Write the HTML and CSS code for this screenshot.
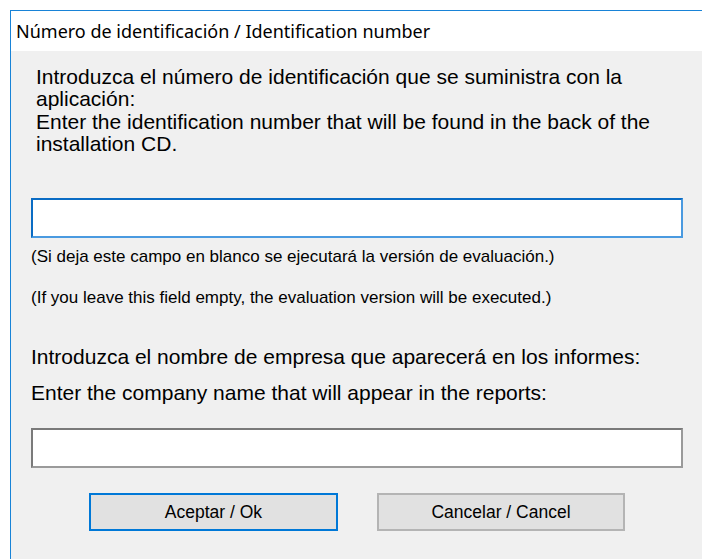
FILE: index.html
```html
<!DOCTYPE html>
<html lang="es">
<head>
<meta charset="utf-8">
<title>Número de identificación</title>
<link rel="stylesheet" href="styles.css">
</head>
<body>
<div class="window">
  <div class="titlebar">Número de identificación / Identification number</div>
  <div class="content">
    <p class="prompt first">Introduzca el número de identificación que se suministra con la aplicación:</p>
    <p class="prompt second">Enter the identification number that will be found in the back of the installation CD.</p>
    <input class="field focused" type="text">
    <p class="note note-es">(Si deja este campo en blanco se ejecutará la versión de evaluación.)</p>
    <p class="note note-en">(If you leave this field empty, the evaluation version will be executed.)</p>
    <p class="label label-es">Introduzca el nombre de empresa que aparecerá en los informes:</p>
    <p class="label label-en">Enter the company name that will appear in the reports:</p>
    <input class="field company" type="text">
    <div class="buttons">
      <button class="btn default" type="button">Aceptar / Ok</button>
      <button class="btn" type="button">Cancelar / Cancel</button>
    </div>
  </div>
</div>
</body>
</html>
```
FILE: styles.css
```css
html, body {
  margin: 0;
  padding: 0;
  background: #ffffff;
  overflow: hidden;
}

.window {
  margin: 10px 0 0 10px;
  width: 720px;
  height: 560px;
  border-top: 1px solid #1883d7;
  border-left: 1px solid #1883d7;
  background: #f0f0f0;
  font-family: "Liberation Sans", Arial, sans-serif;
  color: #000;
}

.titlebar {
  height: 40px;
  line-height: 40px;
  padding-left: 5px;
  background: #ffffff;
  font-family: "Noto Sans", "Open Sans", sans-serif;
  font-size: 18px;
  color: #000;
}

.content {
  padding: 0 0 0 20px;
  width: 652px;
}

.prompt {
  margin: 0 0 0 5px;
  font-size: 21px;
  line-height: 22px;
}

.prompt.first {
  padding-top: 15px;
}

.prompt.second {
  margin-top: 1px;
}

.field {
  display: block;
  box-sizing: border-box;
  width: 652px;
  height: 40px;
  margin: 0;
  padding: 0 4px;
  background: #fff;
  border: 2px solid #8a8a8a;
  border-color: #7a7a7a #9a9a9a #9a9a9a #7a7a7a;
  outline: none;
  font-family: inherit;
}

.field.focused {
  margin-top: 43px;
  border: 2px solid #0078d7;
  border-color: #0a6cc4 #4a9ae0 #4a9ae0 #0a6cc4;
}

.field.company {
  margin-top: 24px;
}

.note {
  margin: 0;
  font-size: 17px;
  line-height: 20px;
}

.note-es {
  margin-top: 9px;
}

.note-en {
  margin-top: 21px;
}

.label {
  margin: 0;
  font-size: 21px;
  line-height: 22px;
}

.label-es {
  margin-top: 38px;
}

.label-en {
  margin-top: 14px;
}

.buttons {
  display: flex;
  gap: 39px;
  margin: 25px 0 0 58px;
}

.btn {
  box-sizing: border-box;
  width: 249px;
  height: 38px;
  padding: 0;
  background: #e1e1e1;
  border: 2px solid #b4b4b4;
  font-family: "Liberation Sans", Arial, sans-serif;
  font-size: 17.5px;
  color: #000;
}

.btn + .btn {
  width: 248px;
}

.btn.default {
  border: 2px solid #0078d7;
}
```
